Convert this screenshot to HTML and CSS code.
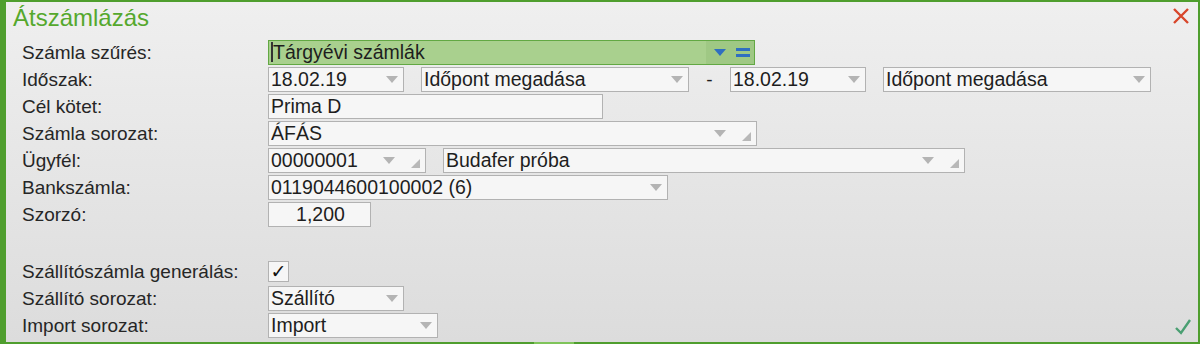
FILE: index.html
```html
<!DOCTYPE html>
<html lang="hu">
<head>
  <meta charset="UTF-8">
  <title>Átszámlázás</title>
  <link rel="stylesheet" href="styles.css">
</head>
<body>

  <div class="window">
    <div class="title-bar">
      <h2>Átszámlázás</h2>
      <svg class="close" width="18" height="18" viewBox="0 0 18 18">
        <path d="M2 2 L16 16 M16 2 L2 16" stroke="#d8462b" stroke-width="2.4" fill="none"/>
      </svg>
    </div>

    <div class="form">
      <div class="row">
        <label>Számla szűrés:</label>
        <div class="field filter w-487">
          <span class="value"><span class="caret"></span>Tárgyévi számlák</span>
          <span class="filter-icons">
            <span class="arrow blue"></span>
            <span class="equals"></span>
          </span>
        </div>
      </div>

      <div class="row">
        <label>Időszak:</label>
        <div class="field w-136"><span class="value">18.02.19</span><span class="arrow"></span></div>
        <div class="field w-268 gap"><span class="value">Időpont megadása</span><span class="arrow"></span></div>
        <span class="dash">-</span>
        <div class="field w-136"><span class="value">18.02.19</span><span class="arrow"></span></div>
        <div class="field w-268 gap"><span class="value">Időpont megadása</span><span class="arrow"></span></div>
      </div>

      <div class="row">
        <label>Cél kötet:</label>
        <div class="field w-335"><span class="value">Prima D</span></div>
      </div>

      <div class="row">
        <label>Számla sorozat:</label>
        <div class="field w-489"><span class="value">ÁFÁS</span><span class="arrow"></span><span class="corner"></span></div>
      </div>

      <div class="row">
        <label>Ügyfél:</label>
        <div class="field w-158"><span class="value">00000001</span><span class="arrow"></span><span class="corner"></span></div>
        <div class="field w-522 gap"><span class="value">Budafer próba</span><span class="arrow"></span><span class="corner"></span></div>
      </div>

      <div class="row">
        <label>Bankszámla:</label>
        <div class="field w-400"><span class="value">0119044600100002 (6)</span><span class="arrow"></span></div>
      </div>

      <div class="row">
        <label>Szorzó:</label>
        <div class="field w-103 number"><span class="value">1,200</span></div>
      </div>

      <div class="row spacer"></div>

      <div class="row">
        <label>Szállítószámla generálás:</label>
        <div class="checkbox">✓</div>
      </div>

      <div class="row">
        <label>Szállító sorozat:</label>
        <div class="field w-136"><span class="value">Szállító</span><span class="arrow"></span></div>
      </div>

      <div class="row">
        <label>Import sorozat:</label>
        <div class="field w-170"><span class="value">Import</span><span class="arrow"></span></div>
      </div>
    </div>

    <svg class="ok" width="18" height="18" viewBox="0 0 18 18">
      <path d="M2 10 L7 15 L16 2" stroke="#4a9f72" stroke-width="2.4" fill="none"/>
    </svg>
    <div class="bottom-tab"></div>
  </div>

</body>
</html>
```

FILE: styles.css
```css
body {
  margin: 0;
  font-family: 'Liberation Sans', Arial, sans-serif;
  color: #1e1e1e;
}

.window {
  position: relative;
  box-sizing: border-box;
  width: 1200px;
  height: 344px;
  border: 2px solid #4f9e2e;
  border-left-width: 6px;
  background: linear-gradient(to bottom, #efefef, #dcdcdc);
}

.title-bar {
  display: flex;
  justify-content: space-between;
  align-items: flex-start;
  height: 38px;
  padding: 0 8px 0 7px;
  box-sizing: border-box;
}

h2 {
  margin: 0;
  padding-top: 1px;
  font-size: 24px;
  line-height: 30px;
  font-weight: normal;
  color: #55a82d;
}

.close {
  margin-top: 5px;
}

.form {
  padding-left: 16px;
}

.row {
  display: flex;
  align-items: center;
  height: 25px;
  margin-bottom: 2px;
}

.row.spacer {
  height: 28px;
}

label {
  width: 246px;
  flex-shrink: 0;
  font-size: 19px;
  line-height: 25px;
  color: #262626;
}

.field {
  position: relative;
  display: flex;
  align-items: center;
  box-sizing: border-box;
  height: 25px;
  border: 1px solid #b2b2b2;
  background: #f6f6f6;
  font-size: 19.5px;
  line-height: 23px;
  padding-left: 2px;
  flex-shrink: 0;
}

.field .value {
  flex: 1;
  white-space: nowrap;
  overflow: hidden;
}

.field.gap {
  margin-left: 17px;
}

.field.number .value {
  text-align: center;
}

.w-103 { width: 103px; }
.w-136 { width: 136px; }
.w-158 { width: 158px; }
.w-170 { width: 170px; }
.w-268 { width: 268px; }
.w-335 { width: 335px; }
.w-400 { width: 400px; }
.w-487 { width: 487px; }
.w-489 { width: 489px; }
.w-522 { width: 522px; }

.arrow {
  width: 0;
  height: 0;
  border-left: 6px solid transparent;
  border-right: 6px solid transparent;
  border-top: 7px solid #b4b4b4;
  margin-right: 5px;
}

.corner {
  width: 0;
  height: 0;
  border-left: 9px solid transparent;
  border-bottom: 9px solid #b8b8b8;
  align-self: flex-end;
  margin: 0 5px 4px 11px;
}

.filter {
  background: #a9d08e;
  border-color: #62a843;
}

.caret {
  display: inline-block;
  width: 2px;
  height: 20px;
  background: #333;
  vertical-align: -3px;
}

.filter-icons {
  display: flex;
  align-items: center;
  gap: 10px;
  height: 100%;
  padding: 0 4px 0 8px;
  background: #9fc884;
}

.arrow.blue {
  border-top-color: #2f6fc0;
  margin-right: 0;
}

.equals {
  width: 14px;
  height: 3px;
  border-top: 3px solid #2f6fc0;
  border-bottom: 3px solid #2f6fc0;
}

.dash {
  width: 41px;
  text-align: center;
  font-size: 19px;
}

.checkbox {
  box-sizing: border-box;
  width: 21px;
  height: 21px;
  border: 1px solid #b2b2b2;
  background: #f6f6f6;
  font-size: 19px;
  line-height: 19px;
  text-align: center;
  color: #111;
  font-family: 'DejaVu Sans', sans-serif;
}

.ok {
  position: absolute;
  right: 6px;
  bottom: 6px;
}

.bottom-tab {
  position: absolute;
  left: 528px;
  bottom: -2px;
  width: 40px;
  height: 2px;
  background: #7fc45a;
}
```
